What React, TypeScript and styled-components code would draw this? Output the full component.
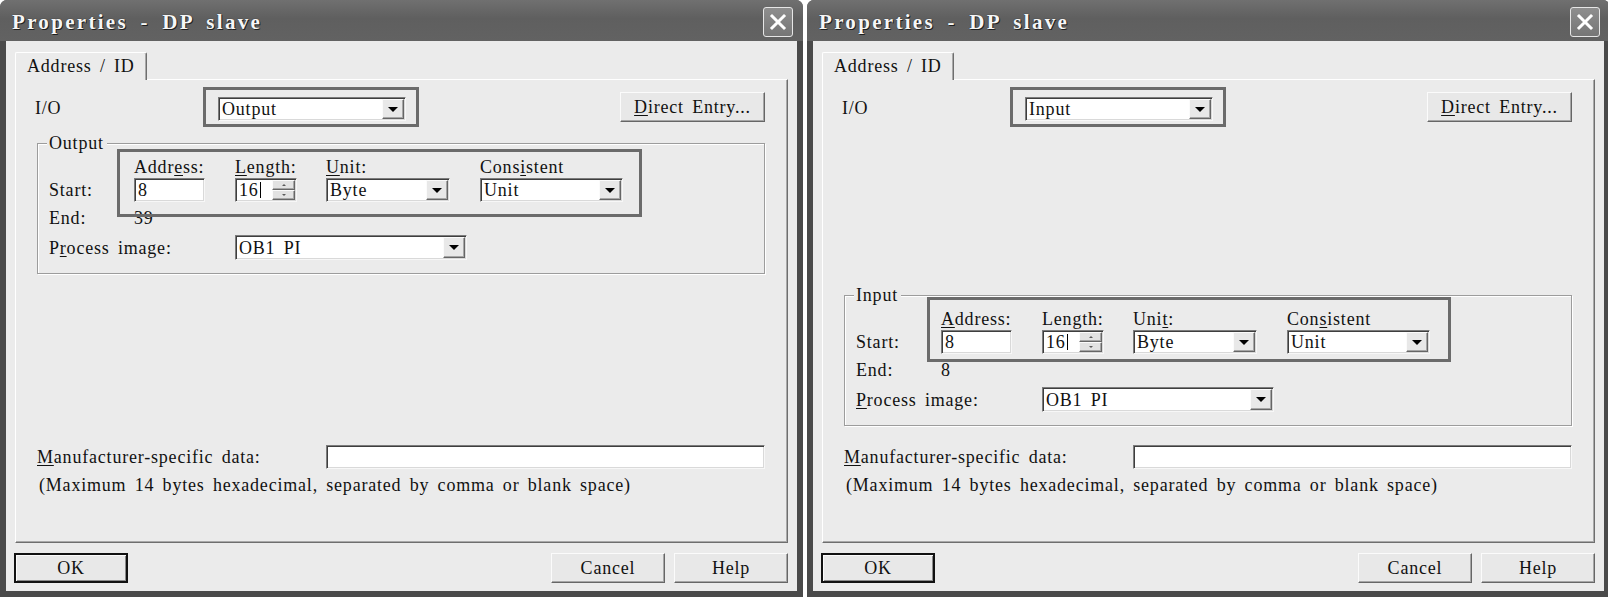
import React from 'react';
import styled, { createGlobalStyle, css } from 'styled-components';

const GlobalStyle = createGlobalStyle`
  html, body { margin: 0; padding: 0; background: #ffffff; }
  body {
    width: 1608px;
    height: 597px;
    overflow: hidden;
    font-family: "Liberation Serif", "DejaVu Serif", serif;
    color: #111;
  }
`;

const Stage = styled.div`
  display: flex;
  gap: 4px;
  width: 1610px;
`;

const Window = styled.div`
  width: 803px;
  height: 597px;
  flex: none;
  display: flex;
  flex-direction: column;
  background: #4a4a4a;
  border-radius: 7px 7px 0 0;
  overflow: hidden;
`;

const TitleBar = styled.div`
  height: 41px;
  flex: none;
  box-sizing: border-box;
  display: flex;
  align-items: center;
  justify-content: space-between;
  padding: 3px 10px 0 12px;
  background: linear-gradient(#707070, #5f5f5f 45%, #626262);
`;

const Title = styled.span`
  font-family: "Liberation Serif", serif;
  font-weight: bold;
  font-size: 21px;
  letter-spacing: 2.3px;
  word-spacing: 5px;
  line-height: 24px;
  color: #f6f6f6;
  text-shadow: 1px 1px 0 #1e1e1e, 0 0 1px #1e1e1e;
  white-space: pre;
`;

const CloseButton = styled.div`
  width: 30px;
  height: 30px;
  box-sizing: border-box;
  border: 1px solid #e6e6e6;
  border-radius: 3px;
  background: linear-gradient(#8e8e8e, #767676);
  display: flex;
  align-items: center;
  justify-content: center;
`;

const Body = styled.div`
  flex: 1;
  margin: 0 6px 6px;
  box-sizing: border-box;
  background: #ebebeb;
  display: flex;
  flex-direction: column;
  padding: 11px 9px 8px;
`;

const TabStrip = styled.div`
  display: flex;
`;

const Tab = styled.div`
  position: relative;
  z-index: 1;
  width: 132px;
  height: 28px;
  margin-bottom: -1px;
  box-sizing: border-box;
  padding: 0 0 2px 11px;
  display: flex;
  align-items: center;
  background: #ebebeb;
  border: 1px solid;
  border-color: #ffffff #6e6e6e transparent #ffffff;
  border-bottom: none;
  border-radius: 2px 2px 0 0;
  box-shadow: inset -1px 0 0 #a9a9a9;
`;

const Text = styled.span`
  font-size: 18px;
  letter-spacing: 0.8px;
  word-spacing: 3px;
  line-height: 20px;
  white-space: pre;
`;

const Key = styled.span`
  text-decoration: underline;
  text-underline-offset: 2px;
`;

const Panel = styled.div`
  flex: 1;
  display: flex;
  flex-direction: column;
  border: 1px solid;
  border-color: #ffffff #6e6e6e #6e6e6e #ffffff;
  box-shadow: inset -1px -1px 0 #a9a9a9;
  padding: 7px 22px 46px 21px;
`;

const IoRow = styled.div`
  display: flex;
  align-items: center;
  height: 40px;
`;

const IoLabel = styled(Text)`
  width: 168px;
  margin-left: -2px;
  padding-top: 2px;
`;

const markerLine = css`
  border: 3px solid #6b6b6b;
  box-sizing: border-box;
`;

const Marker = styled.div`
  ${markerLine};
  height: 40px;
  padding: 7px 10px 3px 12px;
`;

const MarkerOverlay = styled.div`
  ${markerLine};
  position: absolute;
  pointer-events: none;
`;

const sunken = css`
  box-sizing: border-box;
  background: #ffffff;
  border: 1px solid;
  border-color: #7c7c7c #f7f7f7 #f7f7f7 #7c7c7c;
  padding: 1px;
  box-shadow: inset 1px 1px 0 #3e3e3e, inset -1px -1px 0 #d9d9d9;
`;

const raised = css`
  box-sizing: border-box;
  background: #e8e8e8;
  border: 1px solid;
  border-color: #fbfbfb #666666 #666666 #fbfbfb;
  box-shadow: inset -1px -1px 0 #a6a6a6;
`;

const Field = styled.div<{ $w: number; $h?: number }>`
  ${sunken};
  width: ${p => p.$w}px;
  height: ${p => p.$h ?? 24}px;
  display: flex;
  align-items: stretch;
`;

const FieldText = styled(Text)`
  flex: 1;
  display: flex;
  align-items: center;
  padding-left: 2px;
  overflow: hidden;
`;

const Caret = styled.span`
  display: inline-block;
  width: 1px;
  height: 16px;
  margin-left: 1px;
  background: #000;
`;

const ArrowButton = styled.div`
  ${raised};
  width: 22px;
  flex: none;
  display: flex;
  align-items: center;
  justify-content: center;
`;

const ArrowDown = styled.span`
  width: 0;
  height: 0;
  border-left: 5px solid transparent;
  border-right: 5px solid transparent;
  border-top: 5px solid #000;
`;

const SpinColumn = styled.div`
  width: 23px;
  flex: none;
  display: flex;
  flex-direction: column;
  margin-left: auto;
`;

const SpinButton = styled.div`
  ${raised};
  flex: 1;
  display: flex;
  align-items: center;
  justify-content: center;
  background: #e2e2e2;
`;

const SmallArrowUp = styled.span`
  width: 0;
  height: 0;
  border-left: 2px solid transparent;
  border-right: 2px solid transparent;
  border-bottom: 2px solid #5a5a5a;
`;

const SmallArrowDown = styled.span`
  width: 0;
  height: 0;
  border-left: 2px solid transparent;
  border-right: 2px solid transparent;
  border-top: 2px solid #5a5a5a;
`;

const PushButton = styled.div<{ $w: number; $default?: boolean }>`
  ${raised};
  width: ${p => p.$w}px;
  height: 30px;
  display: flex;
  align-items: center;
  justify-content: center;
  ${p =>
    p.$default &&
    css`
      border: 2px solid #111;
      box-shadow: inset 1px 1px 0 #fbfbfb, inset -1px -1px 0 #8a8a8a;
    `}
`;

const DirectButton = styled(PushButton)`
  margin-left: auto;
`;

const Group = styled.fieldset<{ $offset: number }>`
  margin: ${p => p.$offset}px 0 0 0;
  min-width: 0;
  padding: 4px 11px 12px 11px;
  border: 1px solid #9c9c9c;
  box-shadow: inset 1px 1px 0 #ffffff, 1px 1px 0 #ffffff;
`;

const Legend = styled.legend`
  font-size: 18px;
  letter-spacing: 0.8px;
  line-height: 16px;
  padding: 0 3px 0 2px;
  margin-left: -2px;
  background: #ebebeb;
  white-space: pre;
`;

const FieldGrid = styled.div`
  position: relative;
  display: grid;
  grid-template-columns: 85px 101px 91px 154px 143px;
  grid-template-rows: 23px 24px 32px 27px;
  align-items: center;
  justify-items: start;
`;

const Cell = styled(Text)<{ $col: number; $span?: number }>`
  grid-column: ${p => p.$col} / span ${p => p.$span ?? 1};
`;

const FieldCell = styled.div<{ $col: number; $span?: number }>`
  grid-column: ${p => p.$col} / span ${p => p.$span ?? 1};
  display: flex;
`;

const MfrSection = styled.div`
  margin-top: auto;
  display: flex;
  flex-direction: column;
  gap: 5px;
`;

const MfrRow = styled.div`
  display: flex;
  align-items: center;
`;

const MfrLabel = styled(Text)`
  width: 289px;
  flex: none;
`;

const MfrInput = styled.div`
  ${sunken};
  flex: 1;
  height: 24px;
`;

const Note = styled(Text)`
  margin-left: 2px;
  line-height: 22px;
`;

const ButtonRow = styled.div`
  display: flex;
  gap: 9px;
  margin-top: 10px;
  & > :first-child {
    margin-right: auto;
    margin-left: -1px;
  }
`;

type Box = { left: number; top: number; w: number; h: number };

type Config = {
  io: string;
  group: string;
  end: string;
  offset: number;
  box: Box;
  address: React.ReactNode;
  length: React.ReactNode;
  unit: React.ReactNode;
  consistent: React.ReactNode;
  process: React.ReactNode;
};

const dialogs: Config[] = [
  {
    io: 'Output',
    group: 'Output',
    end: '39',
    offset: 8,
    box: { left: 68, top: -6, w: 525, h: 68 },
    address: (
      <>
        Addr<Key>e</Key>ss:
      </>
    ),
    length: (
      <>
        <Key>L</Key>ength:
      </>
    ),
    unit: (
      <>
        <Key>U</Key>nit:
      </>
    ),
    consistent: (
      <>
        Cons<Key>i</Key>stent
      </>
    ),
    process: (
      <>
        P<Key>r</Key>ocess image:
      </>
    ),
  },
  {
    io: 'Input',
    group: 'Input',
    end: '8',
    offset: 160,
    box: { left: 71, top: -10, w: 524, h: 65 },
    address: (
      <>
        <Key>A</Key>ddress:
      </>
    ),
    length: <>Length:</>,
    unit: (
      <>
        Uni<Key>t</Key>:
      </>
    ),
    consistent: (
      <>
        Con<Key>s</Key>istent
      </>
    ),
    process: (
      <>
        <Key>P</Key>rocess image:
      </>
    ),
  },
];

const CloseIcon = () => (
  <svg width="18" height="18" viewBox="0 0 18 18">
    <path d="M3 3 L15 15 M15 3 L3 15" stroke="#ffffff" strokeWidth="3" strokeLinecap="square" />
  </svg>
);

const Dropdown = ({ value, w, h }: { value: string; w: number; h?: number }) => (
  <Field $w={w} $h={h}>
    <FieldText>{value}</FieldText>
    <ArrowButton>
      <ArrowDown />
    </ArrowButton>
  </Field>
);

const Dialog = ({ c }: { c: Config }) => (
  <Window>
    <TitleBar>
      <Title>Properties - DP slave</Title>
      <CloseButton>
        <CloseIcon />
      </CloseButton>
    </TitleBar>
    <Body>
      <TabStrip>
        <Tab>
          <Text>Address / ID</Text>
        </Tab>
      </TabStrip>
      <Panel>
        <IoRow>
          <IoLabel>I/O</IoLabel>
          <Marker>
            <Dropdown value={c.io} w={188} />
          </Marker>
          <DirectButton $w={145}>
            <Text>
              <Key>D</Key>irect Entry...
            </Text>
          </DirectButton>
        </IoRow>
        <Group $offset={c.offset}>
          <Legend>{c.group}</Legend>
          <FieldGrid>
            <Cell $col={2}>{c.address}</Cell>
            <Cell $col={3}>{c.length}</Cell>
            <Cell $col={4}>{c.unit}</Cell>
            <Cell $col={5}>{c.consistent}</Cell>

            <Cell $col={1}>Start:</Cell>
            <FieldCell $col={2}>
              <Field $w={71}>
                <FieldText>8</FieldText>
              </Field>
            </FieldCell>
            <FieldCell $col={3}>
              <Field $w={62}>
                <FieldText>
                  16
                  <Caret />
                </FieldText>
                <SpinColumn>
                  <SpinButton>
                    <SmallArrowUp />
                  </SpinButton>
                  <SpinButton>
                    <SmallArrowDown />
                  </SpinButton>
                </SpinColumn>
              </Field>
            </FieldCell>
            <FieldCell $col={4}>
              <Dropdown value="Byte" w={124} />
            </FieldCell>
            <FieldCell $col={5}>
              <Dropdown value="Unit" w={143} />
            </FieldCell>

            <Cell $col={1}>End:</Cell>
            <Cell $col={2}>{c.end}</Cell>

            <Cell $col={1} $span={2}>
              {c.process}
            </Cell>
            <FieldCell $col={3} $span={2}>
              <Dropdown value="OB1 PI" w={232} h={25} />
            </FieldCell>

            <MarkerOverlay
              style={{ left: c.box.left, top: c.box.top, width: c.box.w, height: c.box.h }}
            />
          </FieldGrid>
        </Group>
        <MfrSection>
          <MfrRow>
            <MfrLabel>
              <Key>M</Key>anufacturer-specific data:
            </MfrLabel>
            <MfrInput />
          </MfrRow>
          <Note>(Maximum 14 bytes hexadecimal, separated by comma or blank space)</Note>
        </MfrSection>
      </Panel>
      <ButtonRow>
        <PushButton $w={114} $default>
          <Text>OK</Text>
        </PushButton>
        <PushButton $w={114}>
          <Text>Cancel</Text>
        </PushButton>
        <PushButton $w={114}>
          <Text>Help</Text>
        </PushButton>
      </ButtonRow>
    </Body>
  </Window>
);

export default function App() {
  return (
    <>
      <GlobalStyle />
      <Stage>
        {dialogs.map(c => (
          <Dialog key={c.io} c={c} />
        ))}
      </Stage>
    </>
  );
}
